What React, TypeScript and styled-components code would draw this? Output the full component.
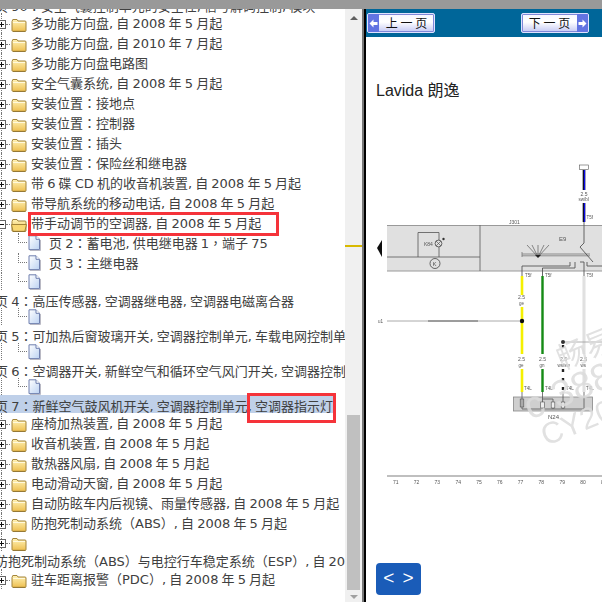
import React from 'react';
import styled, { createGlobalStyle } from 'styled-components';

/* ---------------------------------- Data ---------------------------------- */

type RowKind = 'folder' | 'open' | 'page' | 'pageIcon' | 'folderIcon' | 'text' | 'selected';

const rows: { kind: RowKind; label?: string }[] = [
  { kind: 'text', label: '页 90：安全气囊控制单元的安全性, 信号解码控制, 模块' },
  { kind: 'folder', label: '多功能方向盘, 自 2008 年 5 月起' },
  { kind: 'folder', label: '多功能方向盘, 自 2010 年 7 月起' },
  { kind: 'folder', label: '多功能方向盘电路图' },
  { kind: 'folder', label: '安全气囊系统, 自 2008 年 5 月起' },
  { kind: 'folder', label: '安装位置：接地点' },
  { kind: 'folder', label: '安装位置：控制器' },
  { kind: 'folder', label: '安装位置：插头' },
  { kind: 'folder', label: '安装位置：保险丝和继电器' },
  { kind: 'folder', label: '带 6 碟 CD 机的收音机装置, 自 2008 年 5 月起' },
  { kind: 'folder', label: '带导航系统的移动电话, 自 2008 年 5 月起' },
  { kind: 'open', label: '带手动调节的空调器, 自 2008 年 5 月起' },
  { kind: 'page', label: '页 2：蓄电池, 供电继电器 1，端子 75' },
  { kind: 'page', label: '页 3：主继电器' },
  { kind: 'pageIcon' },
  { kind: 'text', label: '页 4：高压传感器, 空调器继电器, 空调器电磁离合器' },
  { kind: 'pageIcon' },
  { kind: 'text', label: '页 5：可加热后窗玻璃开关, 空调器控制单元, 车载电网控制单元' },
  { kind: 'pageIcon' },
  { kind: 'text', label: '页 6：空调器开关, 新鲜空气和循环空气风门开关, 空调器控制单元' },
  { kind: 'pageIcon' },
  { kind: 'selected', label: '页 7：新鲜空气鼓风机开关, 空调器控制单元, 空调器指示灯' },
  { kind: 'folder', label: '座椅加热装置, 自 2008 年 5 月起' },
  { kind: 'folder', label: '收音机装置, 自 2008 年 5 月起' },
  { kind: 'folder', label: '散热器风扇, 自 2008 年 5 月起' },
  { kind: 'folder', label: '电动滑动天窗, 自 2008 年 5 月起' },
  { kind: 'folder', label: '自动防眩车内后视镜、雨量传感器, 自 2008 年 5 月起' },
  { kind: 'folder', label: '防抱死制动系统（ABS）, 自 2008 年 5 月起' },
  { kind: 'folderIcon' },
  { kind: 'text', label: '防抱死制动系统（ABS）与电控行车稳定系统（ESP）, 自 2008 年 5 月起' },
  { kind: 'folder', label: '驻车距离报警（PDC）, 自 2008 年 5 月起' },
];

const rowHeights: Partial<Record<RowKind, number>> = { pageIcon: 17, folderIcon: 18 };

const rulerNumbers = [71, 72, 73, 74, 75, 76, 77, 78, 79, 80, 81];

/* ---------------------------------- Icons --------------------------------- */

const FolderIcon = ({ open }: { open?: boolean }) => (
  <FolderSvg viewBox="0 0 16 14">
    <defs>
      <linearGradient id="fold" x1="0" y1="0" x2="0" y2="1">
        <stop offset="0" stopColor="#fff3b8" />
        <stop offset="1" stopColor="#eebf50" />
      </linearGradient>
    </defs>
    <path
      d="M1 3.5 L1.8 1.5 H6 L7 3 H14 Q15 3 15 4 V12.5 Q15 13.3 14 13.3 H2 Q1 13.3 1 12.5 Z"
      fill="url(#fold)"
      stroke="#a3843a"
    />
    {open ? (
      <path d="M0.5 6.5 H13 L15.5 6.5 L13.8 13.3 H2 Z" fill="#f9d873" stroke="#a3843a" />
    ) : (
      <path d="M2 4.5 H14" stroke="#fff9dc" />
    )}
    <path d="M2 13.6 H14.5" stroke="#8a6d28" strokeWidth="0.8" />
  </FolderSvg>
);

const PageIcon = () => (
  <PageSvg viewBox="0 0 13 16">
    <defs>
      <linearGradient id="doc" x1="0" y1="0" x2="1" y2="1">
        <stop offset="0" stopColor="#ffffff" />
        <stop offset="1" stopColor="#bcd2f2" />
      </linearGradient>
    </defs>
    <path d="M1 0.8 H8 L11.5 4.3 V14.6 H1 Z" fill="url(#doc)" stroke="#6f7fae" />
    <path d="M8 0.8 V4.3 H11.5" fill="#fff" stroke="#6f7fae" />
    <path d="M2 15.5 H12.5 V5" fill="none" stroke="#b9b9c4" />
  </PageSvg>
);

const PagerArrowIcon = ({ flip }: { flip?: boolean }) => (
  <svg width="9" height="9" viewBox="0 0 9 9" style={flip ? { transform: 'scaleX(-1)' } : undefined}>
    <path d="M0.5 4.5 L4.5 0.5 V3 H8.5 V6 H4.5 V8.5 Z" fill="#fff" />
  </svg>
);

const WiringDiagram = () => (
  <Diagram viewBox="366 150 236 340">
    <defs>
      <filter id="soft">
        <feGaussianBlur stdDeviation="0.35" />
      </filter>
    </defs>
    <g filter="url(#soft)">
      <path d="M382 240 L377 248 L382 257 Z" fill="#111" />
      <rect x="387" y="225" width="215" height="46" fill="#e0e0e0" />
      <path d="M387 225.5 H602 M387 271 H602" stroke="#999" strokeWidth="1.2" />
      <path d="M387 257 H480 M480 225 V271" stroke="#666" strokeWidth="0.9" />
      <path d="M418 257 V232.5 H439 V240" fill="none" stroke="#555" strokeWidth="0.8" />
      <circle cx="438.5" cy="243.5" r="3.4" fill="none" stroke="#444" strokeWidth="0.8" />
      <path d="M436 241 L441 246 M441 241 L436 246" stroke="#444" strokeWidth="0.6" />
      <path d="M439 247 V257" stroke="#555" strokeWidth="0.8" />
      <circle cx="443.5" cy="239" r="1.2" fill="#333" />
      <circle cx="435" cy="263.5" r="5" fill="none" stroke="#444" strokeWidth="0.8" />
      <Tiny x="432.5" y="265.5" $size={6}>K</Tiny>
      <Tiny x="424" y="246" $size={5}>K84</Tiny>
      <Tiny x="509" y="224" $size={5}>J301</Tiny>
      <Tiny x="559" y="241" $size={6}>E9</Tiny>

      <path d="M522 254 H590 M522 255.8 H590 M522 252 V257" stroke="#777" strokeWidth="0.8" />
      <path d="M538 257 L527 245 M538 257 L532 245 M538 257 L538 245 M538 257 L544 245 M538 257 L549 245" stroke="#444" strokeWidth="0.6" />
      <path d="M535 255 H541 L538 258 Z" fill="#222" />
      <path d="M584 222 V243 L580 247 L593 262" fill="none" stroke="#555" strokeWidth="0.9" />
      <path d="M522 276 V266 H570 V262 M542.5 276 V268 H575 V262 M584 276 V262 H580 M587 262 V266 H602" fill="none" stroke="#555" strokeWidth="0.9" />
      <Tiny x="525" y="277" $size={4.5}>T5f</Tiny>
      <Tiny x="545" y="277" $size={4.5}>T5f</Tiny>
      <Tiny x="586.5" y="277" $size={4.5}>T5f</Tiny>
      <Tiny x="586.5" y="219" $size={4.5}>T5f</Tiny>

      <rect x="579.5" y="165" width="9" height="4.5" fill="#fff" stroke="#555" strokeWidth="0.6" />
      <path d="M584 170 V190 M584 203 V222" stroke="#111" strokeWidth="2.6" />
      <path d="M584.5 170 V190 M584.5 203 V222" stroke="#1111ee" strokeWidth="1.2" />
      <Tiny x="580.5" y="196" $size={5}>2.5</Tiny>
      <Tiny x="578.5" y="201" $size={4.5}>sw/bl</Tiny>

      <path d="M522 276 V295 M522 307 V354 M522 369 V392" stroke="#f5f000" strokeWidth="2.6" />
      <path d="M542.5 276 V354 M542.5 369 V392" stroke="#128a12" strokeWidth="2.4" />
      <path d="M584 276 V354 M584 369 V392" stroke="#c8c8c8" strokeWidth="2.6" />
      <path d="M584 276 V354 M584 369 V392" stroke="#fff" strokeWidth="0.9" />
      <Tiny x="518" y="299" $size={5}>2.5</Tiny>
      <Tiny x="519" y="305" $size={4.5}>ge</Tiny>

      <path d="M387 321 H522" stroke="#aaa" strokeWidth="1" />
      <path d="M428 321 H478" stroke="#666" strokeWidth="1.1" />
      <circle cx="522" cy="321" r="2.2" fill="#111" />
      <Tiny x="378" y="323" $size={4.5}>u1</Tiny>

      <path d="M563 342 H602" stroke="#999" strokeWidth="0.8" />
      <circle cx="563" cy="342" r="2" fill="#333" />
      <path d="M563 345 V354 M563 369 V390" stroke="#222" strokeWidth="2.4" strokeDasharray="3 6" />

      {[
        { x: 518, t: 'ge' },
        { x: 539, t: 'gn' },
        { x: 557, t: 'ws/sw' },
        { x: 580, t: 'ws' },
      ].map(({ x, t }) => (
        <g key={t}>
          <Tiny x={x + (t === 'ws/sw' ? 3 : 0)} y="361" $size={5}>2.5</Tiny>
          <Tiny x={x + 0.5} y="367" $size={4.5}>{t}</Tiny>
        </g>
      ))}
      {[524, 545, 566, 586].map((x) => (
        <Tiny key={x} x={x} y="390" $size={4.5}>T4L</Tiny>
      ))}

      <rect x="513.5" y="397" width="79" height="14" fill="#cfcfcf" stroke="#888" strokeWidth="0.8" />
      <path d="M522 392 V400 M542.5 392 V402 M563 392 V402 M584 392 V409 H522 V407 M542.5 405 V409 M553 399 H542.5 M553 399 V402 M553 407 V409 M563 407 V409" fill="none" stroke="#555" strokeWidth="0.8" />
      <rect x="520.2" y="399" width="3.6" height="8" fill="#aaa" stroke="#555" strokeWidth="0.6" />
      <rect x="540.7" y="402" width="3.6" height="6" fill="#eee" stroke="#555" strokeWidth="0.6" />
      <rect x="551.2" y="402" width="3.6" height="6" fill="#eee" stroke="#555" strokeWidth="0.6" />
      <rect x="561.2" y="402" width="3.6" height="6" fill="#eee" stroke="#555" strokeWidth="0.6" />
      <Tiny x="548" y="419" $size={6}>N24</Tiny>

      <path d="M387 476 H602" stroke="#aaa" strokeWidth="1.6" />
      {rulerNumbers.map((n, i) => (
        <Tiny key={n} x={393 + i * 20.8} y="484" $size={5}>{n}</Tiny>
      ))}
    </g>

    <Watermark x="562" y="370" $size={30} transform="rotate(-22 562 370)">畅易</Watermark>
    <Watermark x="530" y="420" $size={38} transform="rotate(-22 530 420)">c 388</Watermark>
    <Watermark x="546" y="446" $size={30} transform="rotate(-22 546 446)">CY20</Watermark>
  </Diagram>
);

/* -------------------------------- Component ------------------------------- */

// the full width colon and comma sit centred in the reference, as in the TC cut
const Label = ({ text }: { text: string }) => (
  <>
    {text.split(/([：，])/).map((part, i) =>
      part === '：' || part === '，' ? <CentredPunct key={i}>{part}</CentredPunct> : part,
    )}
  </>
);

const TreeRow = ({ kind, label }: { kind: RowKind; label?: string }) => {
  if (kind === 'text' || kind === 'selected') {
    return (
      <TextRow $selected={kind === 'selected'}>
        <Label text={label ?? ''} />
      </TextRow>
    );
  }
  if (kind === 'page' || kind === 'pageIcon') {
    return (
      <BranchRow $height={rowHeights[kind] ?? 20}>
        <PageGuide />
        <PageIcon />
        {label && (
          <PageLabel>
            <Label text={label} />
          </PageLabel>
        )}
      </BranchRow>
    );
  }
  return (
    <BranchRow $height={rowHeights[kind] ?? 20}>
      <Expander $open={kind === 'open'} />
      <ExpanderGuide />
      <FolderIcon open={kind === 'open'} />
      {label && (
        <FolderLabel>
          <Label text={label} />
        </FolderLabel>
      )}
    </BranchRow>
  );
};

const App = () => (
  <>
    <GlobalStyle />
    <Frame>
      <TopBar />
      <Body>
        <TreePane>
          {rows.map((row, index) => (
            <TreeRow key={index} kind={row.kind} label={row.label} />
          ))}
        </TreePane>
        <ScrollTrack>
          <ArrowUp />
          <ThumbGap />
          <Thumb />
          <ArrowDown />
          <ScrollMark />
        </ScrollTrack>
        <Divider />
        <ContentPane>
          <PageHeader>
            <PagerButton>
              <PagerArrow>
                <PagerArrowIcon />
              </PagerArrow>
              <PagerText>上 一 页</PagerText>
            </PagerButton>
            <PagerButton>
              <PagerText>下 一 页</PagerText>
              <PagerArrow>
                <PagerArrowIcon flip />
              </PagerArrow>
            </PagerButton>
          </PageHeader>
          <PageTitle>Lavida 朗逸</PageTitle>
          <WiringDiagram />
          <BottomNav>&lt; &gt;</BottomNav>
        </ContentPane>
      </Body>
      <RedMark $left={28} $top={212} $width={251} $height={24} />
      <RedMark $left={247} $top={393} $width={89} $height={30} />
    </Frame>
  </>
);

/* --------------------------------- Styles --------------------------------- */

const GlobalStyle = createGlobalStyle`
  html, body {
    margin: 0;
    padding: 0;
    height: 100%;
    overflow: hidden;
    background: #fff;
  }
`;

const Frame = styled.div`
  position: relative;
  width: 602px;
  height: 602px;
  display: flex;
  flex-direction: column;
  overflow: hidden;
  font-family: 'DejaVu Sans', 'Noto Sans CJK SC', sans-serif;
`;

const TopBar = styled.div`
  flex: 0 0 9px;
  background: #999;
  position: relative;
  z-index: 2;
`;

const Body = styled.div`
  flex: 1;
  display: flex;
  min-height: 0;
`;

const TreePane = styled.div`
  flex: 0 0 345px;
  width: 345px;
  overflow: hidden;
  margin-top: -14px;
  font-size: 13px;
  word-spacing: -1px;
  color: #404040;
  white-space: nowrap;
`;

const CentredPunct = styled.span`
  font-family: 'Noto Sans CJK TC', sans-serif;
`;

const BranchRow = styled.div<{ $height: number }>`
  display: flex;
  align-items: center;
  height: ${(p) => p.$height}px;
  margin-left: 1px;
  border-left: 1px dotted #777;
`;

const Expander = styled.span<{ $open: boolean }>`
  flex: none;
  width: 9px;
  height: 9px;
  margin: 2px 0 0 -5px;
  box-sizing: border-box;
  border: 1px solid #666;
  background:
    linear-gradient(#111, #111) center / 5px 1px no-repeat,
    ${(p) => (p.$open ? 'none' : 'linear-gradient(#111, #111) center / 1px 5px no-repeat')},
    #fff;
`;

const ExpanderGuide = styled.span`
  flex: none;
  width: 4px;
  margin: 2px 1px 0 0;
  border-top: 1px dotted #777;
`;

const FolderSvg = styled.svg`
  flex: none;
  width: 16px;
  height: 14px;
  margin-top: 4px;
`;

const FolderLabel = styled.span`
  margin: 0 0 2px 4px;
`;

const PageGuide = styled.span`
  flex: none;
  align-self: flex-start;
  width: 9px;
  height: 50%;
  margin-left: 16px;
  box-sizing: border-box;
  border-left: 1px dotted #777;
  border-bottom: 1px dotted #777;
`;

const PageSvg = styled.svg`
  flex: none;
  width: 13px;
  height: 16px;
  margin-left: 1px;
`;

const PageLabel = styled.span`
  margin: 0 0 2px 8px;
`;

const TextRow = styled.div<{ $selected: boolean }>`
  width: fit-content;
  height: 18px;
  line-height: 21px;
  margin-left: -5px;
  background: ${(p) => (p.$selected ? '#bfd0e9' : 'transparent')};
`;

const ScrollTrack = styled.div`
  position: relative;
  flex: 0 0 17px;
  display: flex;
  flex-direction: column;
  align-items: center;
  background: #f0f0f0;
`;

const ArrowUp = styled.span`
  margin-top: 7px;
  width: 0;
  height: 0;
  border-left: 4px solid transparent;
  border-right: 4px solid transparent;
  border-bottom: 4px solid #606060;
`;

const ThumbGap = styled.span`
  flex: 1;
`;

const Thumb = styled.span`
  flex: 0 0 175px;
  width: 13px;
  background: #c0c0c0;
`;

const ArrowDown = styled.span`
  margin: 5px 0 3px;
  width: 0;
  height: 0;
  border-left: 4px solid transparent;
  border-right: 4px solid transparent;
  border-top: 4px solid #a0a0a0;
`;

const ScrollMark = styled.span`
  position: absolute;
  left: 0;
  right: 0;
  top: 236px;
  height: 2px;
  background: #d8b900;
`;

const Divider = styled.div`
  flex: 0 0 4px;
  background: linear-gradient(90deg, #777 0 50%, #000 50%);
`;

const ContentPane = styled.div`
  flex: 1;
  display: flex;
  flex-direction: column;
  min-width: 0;
  background: #fff;
`;

const PageHeader = styled.div`
  flex: 0 0 28px;
  display: flex;
  align-items: center;
  justify-content: space-between;
  padding: 0 13px 0 1px;
  background: #006699;
`;

const PagerButton = styled.div`
  display: flex;
  align-items: stretch;
  width: 68px;
  height: 20px;
  box-sizing: border-box;
  border: 1px solid #dfe2ff;
  border-radius: 2px;
  overflow: hidden;
  background: linear-gradient(#f6f6ff, #fff 45%, #c4c8f4);
  box-shadow: inset 0 0 0 1px #8088d8;
`;

const PagerArrow = styled.span`
  flex: 0 0 11px;
  display: flex;
  align-items: center;
  justify-content: center;
  background: #6274e2;
`;

const PagerText = styled.span`
  flex: 1;
  text-align: center;
  font: 12px/18px 'Noto Sans CJK SC', sans-serif;
  color: #111;
`;

const PageTitle = styled.div`
  flex: 0 0 113px;
  padding: 45px 0 0 10px;
  box-sizing: border-box;
  font: 16px/18px 'Liberation Sans', 'Noto Sans CJK SC', sans-serif;
  color: #222;
`;

const Diagram = styled.svg`
  flex: 0 0 340px;
  width: 236px;
  height: 340px;
`;

const Tiny = styled.text<{ $size: number }>`
  font-family: 'Liberation Sans', sans-serif;
  font-size: ${(p) => p.$size}px;
  fill: #555;
`;

const Watermark = styled.text<{ $size: number }>`
  font-family: 'Liberation Sans', 'Noto Sans CJK SC', sans-serif;
  font-size: ${(p) => p.$size}px;
  fill: #dcdcdc;
  opacity: 0.85;
`;

const BottomNav = styled.div`
  width: 45px;
  height: 32px;
  margin: 73px 0 0 10px;
  border-radius: 4px;
  background: #1a5cb8;
  color: #fff;
  text-align: center;
  word-spacing: 3px;
  font: 19px/29px 'Liberation Sans', sans-serif;
`;

const RedMark = styled.div<{ $left: number; $top: number; $width: number; $height: number }>`
  position: absolute;
  left: ${(p) => p.$left}px;
  top: ${(p) => p.$top}px;
  width: ${(p) => p.$width}px;
  height: ${(p) => p.$height}px;
  box-sizing: border-box;
  border: 3px solid #f5333a;
`;

export default App;
